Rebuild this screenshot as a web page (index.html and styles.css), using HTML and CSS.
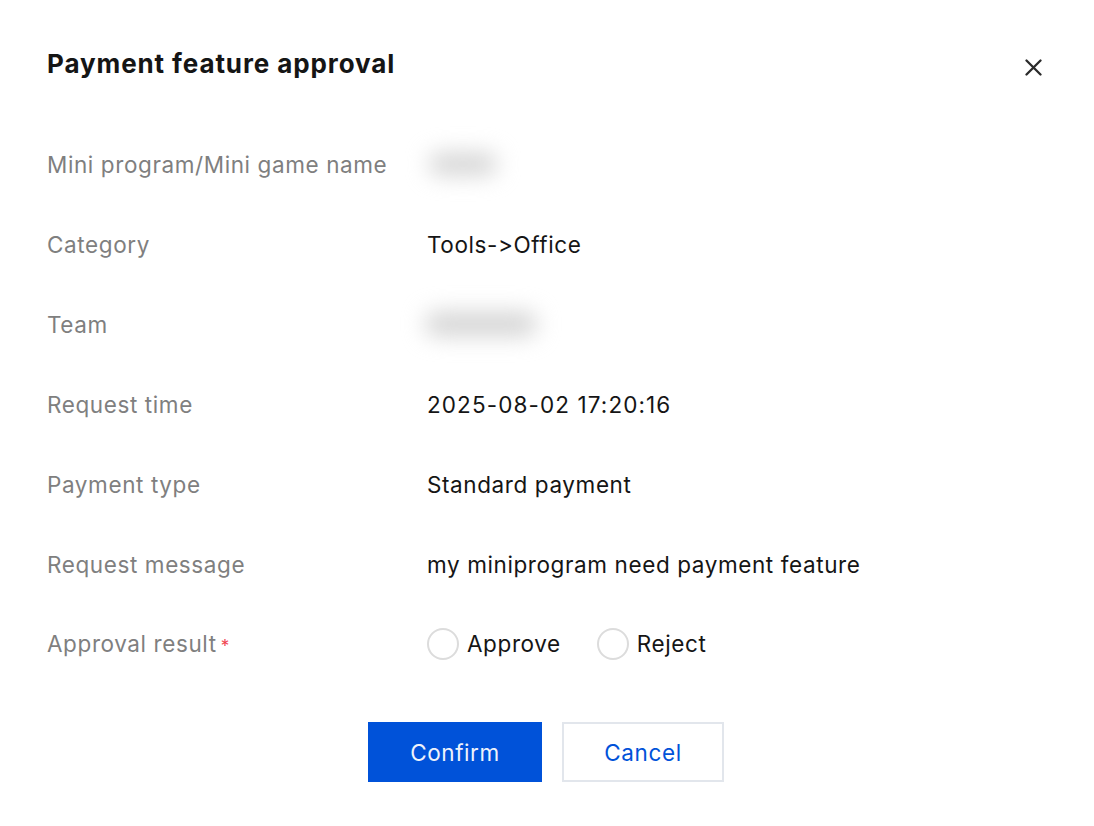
FILE: index.html
```html
<!DOCTYPE html>
<html>
<head>
<meta charset="utf-8">
<link rel="stylesheet" href="styles.css">
</head>
<body>
<div class="dialog">
  <div class="header">
    <h1 class="title">Payment feature approval</h1>
    <button class="close" aria-label="Close">
      <svg width="17" height="17" viewBox="0 0 17 17"><path d="M1.5 1.5L15.5 15.5M15.5 1.5L1.5 15.5" stroke="#2b2b2b" stroke-width="2.3" stroke-linecap="round"/></svg>
    </button>
  </div>
  <div class="rows">
    <div class="row"><div class="label">Mini program/Mini game name</div><div class="value"><span class="blur blur-a"></span></div></div>
    <div class="row"><div class="label">Category</div><div class="value">Tools-&gt;Office</div></div>
    <div class="row"><div class="label">Team</div><div class="value"><span class="blur blur-b"></span></div></div>
    <div class="row"><div class="label">Request time</div><div class="value value-num">2025-08-02 17:20:16</div></div>
    <div class="row"><div class="label">Payment type</div><div class="value">Standard payment</div></div>
    <div class="row"><div class="label">Request message</div><div class="value">my miniprogram need payment feature</div></div>
    <div class="row row-radio"><div class="label">Approval result<span class="req">*</span></div>
      <div class="value radios">
        <label class="radio"><span class="circle"></span>Approve</label>
        <label class="radio"><span class="circle"></span>Reject</label>
      </div>
    </div>
  </div>
  <div class="footer">
    <button class="btn btn-primary">Confirm</button>
    <button class="btn btn-default">Cancel</button>
  </div>
</div>
</body>
</html>
```

FILE: styles.css
```css
* { box-sizing: border-box; }
html, body { margin: 0; padding: 0; background: #fff; }
body { font-family: Inter, "Noto Sans", sans-serif; color: #1a1a1a; font-feature-settings: "calt" 0, "liga" 0; }
.dialog { padding: 44px 47px 0 47px; }
.header { display: flex; justify-content: space-between; align-items: flex-start; height: 40px; }
.title { margin: 0; font-size: 26px; font-weight: 700; line-height: 40px; color: #151515; letter-spacing: 0.9px; }
.close { border: 0; background: none; padding: 0; margin-top: 15px; margin-right: 5px; width: 17px; height: 17px; display: flex; }
.rows { margin-top: 40px; display: flex; flex-direction: column; }
.row { display: flex; align-items: center; height: 80px; font-size: 22.5px; letter-spacing: 0.6px; }
.label { width: 380px; color: #7f7f7f; display: flex; align-items: center; }
.value { color: #151515; display: flex; align-items: center; }
.value-num { letter-spacing: 1.1px; }
.req { color: #f0414e; font-size: 17px; margin-left: 4px; margin-top: 6px; }
.blur { display: inline-block; background: #d4d4d4; filter: blur(11px); border-radius: 20px; }
.blur-a { width: 68px; height: 22px; margin-left: 2px; }
.blur-b { width: 112px; height: 24px; margin-left: -2px; }
.row-radio { height: 80px; margin-top: -2px; padding-top: 2px; }
.radio { display: flex; align-items: center; margin-right: 36px; }
.circle { width: 32px; height: 32px; border: 2px solid #dcdcdc; border-radius: 50%; margin-right: 8px; margin-top: 2px; }
.footer { display: flex; justify-content: center; gap: 20px; margin-top: 40px; padding-right: 2px; }
.btn { height: 60px; font-family: Inter, "Noto Sans", sans-serif; font-size: 22.5px; letter-spacing: 0.6px; cursor: pointer; }
.btn-primary { width: 174px; background: #0052d9; color: #eef2fb; border: 0; }
.btn-default { width: 162px; background: #fff; color: #0052d9; border: 2px solid #e2e6ec; }
```
